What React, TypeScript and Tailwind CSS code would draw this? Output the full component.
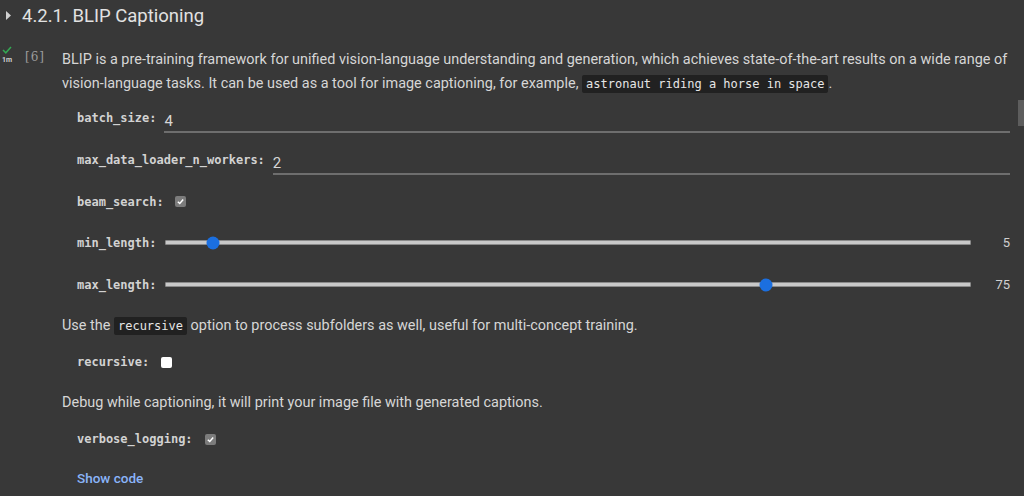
import React from "react";

const mono = "font-['DejaVu_Sans_Mono',monospace]";
const code = `${mono} inline-block rounded-[2px] bg-[#212121] px-[4px] text-[12px] leading-[18px] text-[#e6e6e6]`;

const Check = () => (
  <span className="flex h-[11px] w-[11px] items-center justify-center rounded-[2px] bg-[#7c7c7c]">
    <svg width="9" height="9" viewBox="0 0 10 10">
      <polyline points="2,5.2 4.2,7.3 8,2.8" fill="none" stroke="#ffffff" strokeWidth="1.6" />
    </svg>
  </span>
);

const TextField = ({ label, value }: { label: string; value: string }) => (
  <div className="flex h-[42px] items-center pl-[15px]">
    <span className={`${mono} text-[12px] font-bold text-[#d2d2d2]`}>{label}</span>
    <div className="ml-[8px] flex-1 self-center pt-[8px]">
      <div className="border-b-2 border-[#6e6e6e] pb-[1px] text-[15px] leading-[18px] text-[#d6d6d6]">
        {value}
      </div>
    </div>
  </div>
);

const Slider = ({ label, value, pos }: { label: string; value: string; pos: string }) => (
  <div className="flex h-[41px] items-center pl-[15px]">
    <span className={`${mono} w-[88px] text-[12px] font-bold text-[#d2d2d2]`}>{label}</span>
    <div className="relative h-[5px] w-[806px] rounded-[1px] border border-[#8a8a8a] bg-[#c8c8c8]">
      <span className={`absolute top-1/2 h-[13px] w-[13px] -translate-x-1/2 -translate-y-1/2 rounded-full bg-[#1b6fe0] ${pos}`} />
    </div>
    <span className="ml-auto text-[13px] text-[#d0d0d0]">{value}</span>
  </div>
);

export default function App() {
  return (
    <div className="relative h-[496px] w-[1024px] overflow-hidden bg-[#383838] font-['Roboto',sans-serif] text-[#d6d6d6]">
      <div className="flex h-[32px] items-center">
        <svg width="22" height="32" viewBox="0 0 22 32" className="shrink-0">
          <polygon points="6,11 11,15.5 6,20" fill="#cfcfcf" />
        </svg>
        <h2 className="text-[18.5px] leading-none text-[#e2e2e2]">4.2.1. BLIP Captioning</h2>
      </div>

      <div className="mt-[12px] flex">
        <div className="flex w-[62px] shrink-0 pt-[2px]">
          <div className="flex w-[14px] flex-col items-center">
            <svg width="10" height="8" viewBox="0 0 10 8">
              <polyline points="1,4 3.8,6.8 9,1" fill="none" stroke="#34a853" strokeWidth="1.5" />
            </svg>
            <span className="mt-[3px] text-[7px] font-bold leading-none text-[#d0d0d0]">1m</span>
          </div>
          <span className="ml-[11px] mt-[4px] font-['DejaVu_Serif',serif] text-[12px] leading-[14px] tracking-[1px] text-[#9c9c9c]">
            [6]
          </span>
        </div>

        <div className="w-[952px]">
          <p className="pt-[4px] text-[14.45px] leading-[24px] text-[#d6d6d6]">
            BLIP is a pre-training framework for unified vision-language understanding and generation, which achieves
            state-of-the-art results on a wide range of vision-language tasks. It can be used as a tool for image
            captioning, for example, <code className={code}>astronaut riding a horse in space</code>.
          </p>

          <div className="mt-[1px] w-[948px]">
            <TextField label="batch_size:" value="4" />
            <TextField label="max_data_loader_n_workers:" value="2" />
            <div className="flex h-[41px] items-center gap-[11px] pl-[15px]">
              <span className={`${mono} text-[12px] font-bold text-[#d2d2d2]`}>beam_search:</span>
              <Check />
            </div>
            <Slider label="min_length:" value="5" pos="left-[5.8%]" />
            <div className="h-[1px]" />
            <Slider label="max_length:" value="75" pos="left-[74.6%]" />
          </div>

          <p className="mt-[9px] text-[14.45px] leading-[24px]">
            Use the <code className={code}>recursive</code> option to process subfolders as well, useful for
            multi-concept training.
          </p>
          <div className="mt-[3px] flex h-[42px] items-center gap-[12px] pl-[15px]">
            <span className={`${mono} text-[12px] font-bold text-[#d2d2d2]`}>recursive:</span>
            <span className="h-[11px] w-[11px] rounded-[2px] bg-white" />
          </div>

          <p className="mt-[8px] text-[14.45px] leading-[24px]">
            Debug while captioning, it will print your image file with generated captions.
          </p>
          <div className="mt-[3px] flex h-[42px] items-center gap-[12px] pl-[15px]">
            <span className={`${mono} text-[12px] font-bold text-[#d2d2d2]`}>verbose_logging:</span>
            <Check />
          </div>

          <div className="mt-[6px] pl-[15px] text-[13.5px] font-medium leading-[24px] text-[#8ab4f8]">Show code</div>
        </div>
      </div>

      <div className="absolute right-0 top-[100px] h-[26px] w-[6px] bg-[#5d5d5d]" />
    </div>
  );
}
